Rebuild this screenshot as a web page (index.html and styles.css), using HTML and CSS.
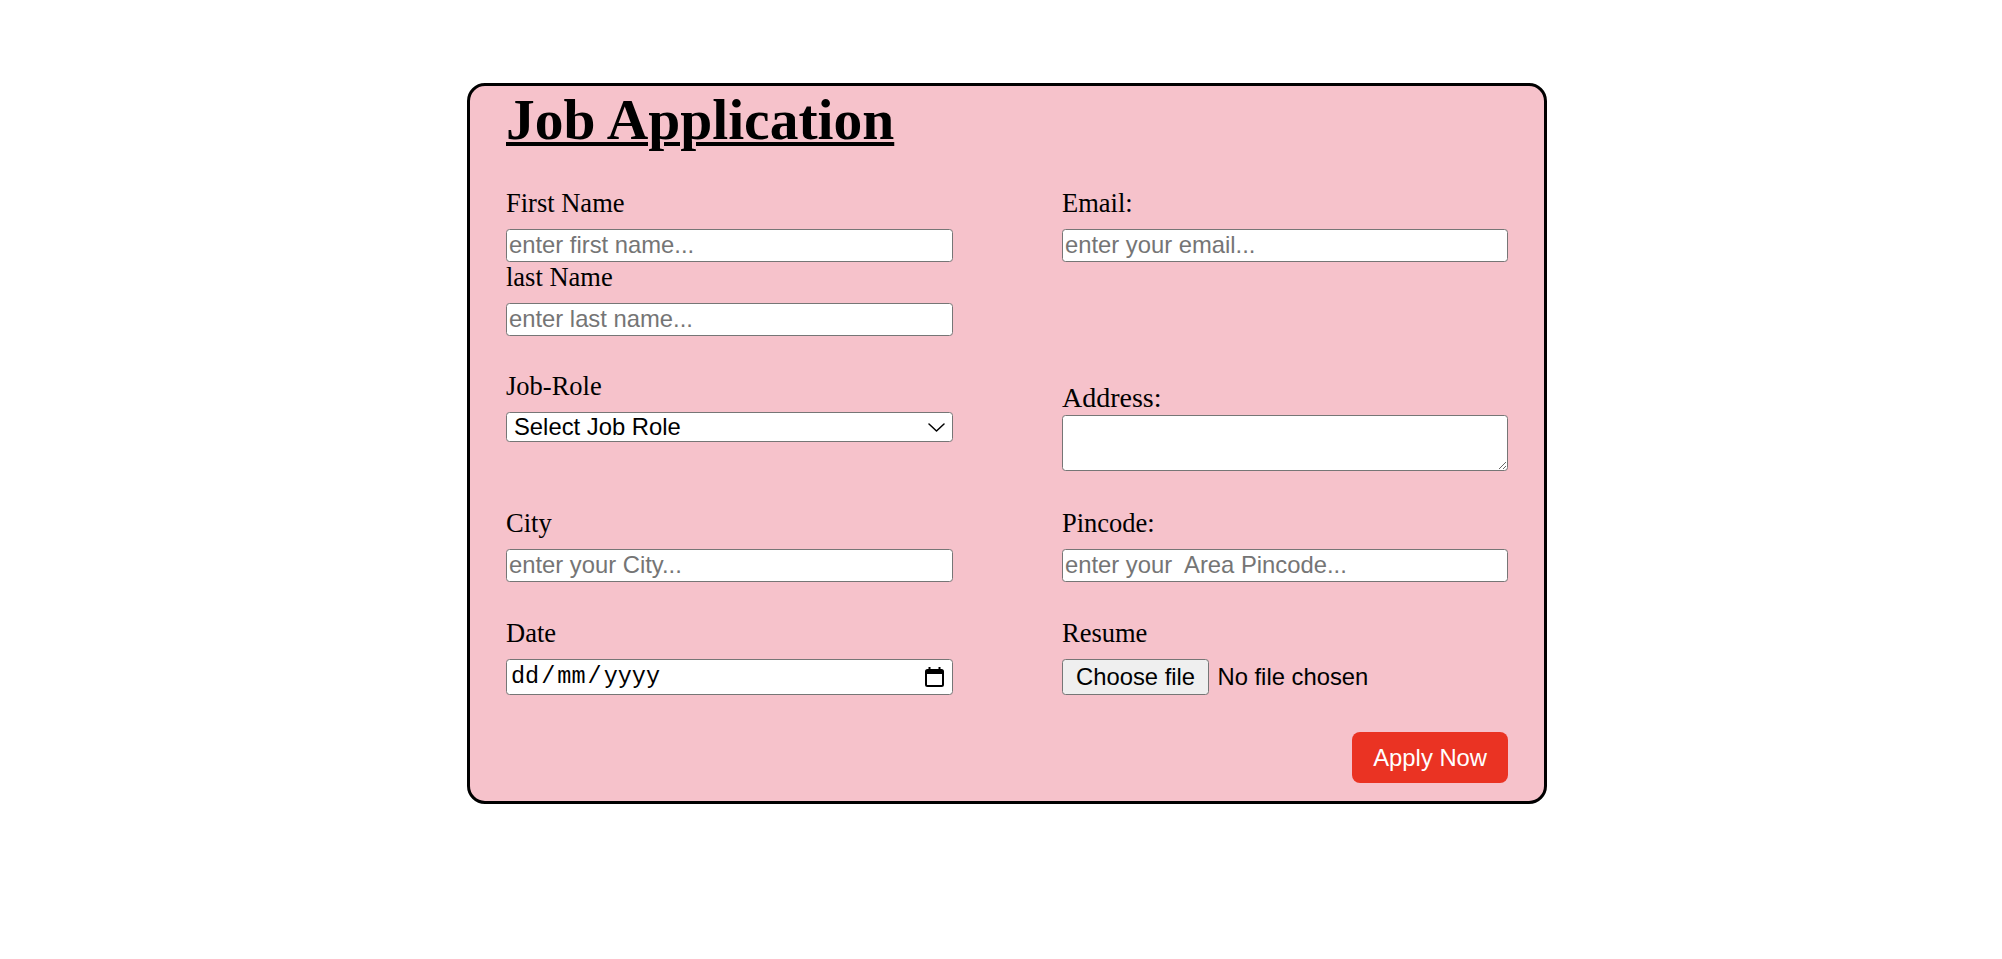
FILE: index.html
```html
<!DOCTYPE html>
<html lang="en">
<head>
<meta charset="utf-8">
<title>Job Application</title>
<link rel="stylesheet" href="styles.css">
</head>
<body>
<div class="page">
  <form class="card">
    <h1 class="title">Job Application</h1>

    <div class="row row-first">
      <div class="field">
        <label class="label" for="fname">First Name</label>
        <input class="control" id="fname" type="text" placeholder="enter first name...">
        <label class="label" for="lname">last Name</label>
        <input class="control" id="lname" type="text" placeholder="enter last name...">
      </div>
      <div class="field">
        <label class="label" for="email">Email:</label>
        <input class="control" id="email" type="email" placeholder="enter your email...">
      </div>
    </div>

    <div class="row row-second">
      <div class="field">
        <label class="label" for="role">Job-Role</label>
        <div class="select-wrap">
          <select class="control select" id="role">
            <option>Select Job Role</option>
            <option>Frontend Developer</option>
            <option>Backend Developer</option>
            <option>Designer</option>
          </select>
          <svg class="chevron" width="17" height="9" viewBox="0 0 17 9" aria-hidden="true">
            <polyline points="1,1 8.5,8 16,1" fill="none" stroke="#000" stroke-width="1.5" stroke-linecap="round" stroke-linejoin="round"/>
          </svg>
        </div>
      </div>
      <div class="field field-address">
        <label class="label label-lg" for="address">Address:</label>
        <textarea class="control textarea" id="address"></textarea>
      </div>
    </div>

    <div class="row row-third">
      <div class="field">
        <label class="label" for="city">City</label>
        <input class="control" id="city" type="text" placeholder="enter your City...">
      </div>
      <div class="field">
        <label class="label" for="pin">Pincode:</label>
        <input class="control" id="pin" type="text" placeholder="enter your  Area Pincode...">
      </div>
    </div>

    <div class="row row-fourth">
      <div class="field">
        <label class="label" for="date">Date</label>
        <div class="control date" id="date" role="textbox">
          <span class="date-text"><span>dd</span><span class="sep">/</span><span>mm</span><span class="sep">/</span><span>yyyy</span></span>
          <svg class="cal" width="19" height="20" viewBox="0 0 19 20" aria-hidden="true">
            <rect x="3.5" y="0" width="2" height="4" fill="#000"/>
            <rect x="13.5" y="0" width="2" height="4" fill="#000"/>
            <rect x="1" y="3" width="17" height="16" rx="1.5" fill="none" stroke="#000" stroke-width="2"/>
            <rect x="1" y="3" width="17" height="4" fill="#000"/>
          </svg>
        </div>
      </div>
      <div class="field">
        <label class="label" for="resume">Resume</label>
        <label class="file">
          <input class="file-input" id="resume" type="file">
          <span class="file-btn">Choose file</span>
          <span class="file-name">No file chosen</span>
        </label>
      </div>
    </div>

    <div class="actions">
      <button class="apply" type="submit">Apply Now</button>
    </div>
  </form>
</div>
</body>
</html>
```

FILE: styles.css
```css
html, body {
  margin: 0;
  padding: 0;
  background: #ffffff;
}

body {
  font-family: "Liberation Serif", "Times New Roman", serif;
  color: #000;
}

.page {
  padding: 83px 0 0 467px;
}

.card {
  box-sizing: border-box;
  width: 1080px;
  border: 3px solid #000;
  border-radius: 18px;
  background: #f6c2cb;
  padding: 0 36px 17.4px;
}

.title {
  margin: 2px 0 35.5px;
  font-size: 57.5px;
  line-height: 64px;
  font-weight: bold;
  text-decoration: underline;
  text-decoration-thickness: 4px;
  text-underline-offset: 3px;
}

.row {
  display: grid;
  grid-template-columns: 447px 446px;
  column-gap: 109px;
  align-items: start;
}

.row-second { margin-top: 35.5px; }
.row-third { margin-top: 36.5px; }
.row-fourth { margin-top: 36px; }

.field {
  display: flex;
  flex-direction: column;
}

.field-address {
  margin-top: 9.5px;
}

.label {
  display: block;
  font-size: 26.5px;
  line-height: 31px;
  margin-bottom: 10px;
}

.label-lg {
  font-size: 28px;
  line-height: 33px;
  margin-bottom: 1.5px;
}

.control {
  box-sizing: border-box;
  width: 100%;
  height: 33px;
  margin: 0;
  padding: 0 2px;
  border: 1px solid #767676;
  border-radius: 3.5px;
  background: #fff;
  font-family: "Liberation Sans", Arial, sans-serif;
  font-size: 23.8px;
  color: #000;
}

.control::placeholder {
  color: #757575;
  opacity: 1;
}

.select-wrap {
  position: relative;
}

.select {
  -webkit-appearance: none;
  appearance: none;
  height: 30px;
  padding: 0 30px 0 7px;
  line-height: 28px;
}

.chevron {
  position: absolute;
  right: 8px;
  top: 11px;
  pointer-events: none;
}

.textarea {
  height: 56.3px;
  resize: both;
  display: block;
}

.date {
  display: flex;
  align-items: center;
  justify-content: space-between;
  height: 36.6px;
  padding: 0 8px 0 4px;
}

.date-text {
  display: flex;
  gap: 3px;
  font-family: "Liberation Mono", "Courier New", monospace;
  font-size: 23.5px;
  line-height: 1;
  color: #000;
}

.date-text .sep {
  margin: 0 -1px;
}

.cal {
  display: block;
  flex: none;
}

.file {
  display: flex;
  align-items: center;
  gap: 8.4px;
  font-family: "Liberation Sans", Arial, sans-serif;
  font-size: 23.8px;
  cursor: pointer;
}

.file-input {
  display: none;
}

.file-btn {
  box-sizing: border-box;
  display: flex;
  align-items: center;
  height: 36.6px;
  padding: 0 13px;
  border: 1px solid #767676;
  border-radius: 3.5px;
  background: #efefef;
  color: #000;
}

.file-name {
  color: #000;
}

.actions {
  display: flex;
  justify-content: flex-end;
  margin-top: 37px;
}

.apply {
  height: 51px;
  padding: 0 21px;
  border: none;
  border-radius: 8px;
  background: #ea3323;
  color: #fff;
  font-family: "Liberation Sans", Arial, sans-serif;
  font-size: 23.8px;
  cursor: pointer;
}
```
